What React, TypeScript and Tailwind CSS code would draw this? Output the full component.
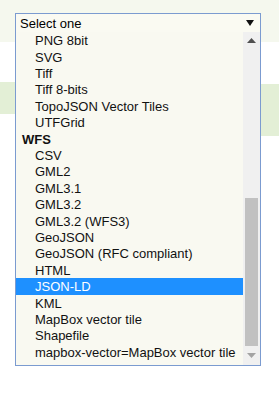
const groups: { label?: string; options: string[] }[] = [
  {
    options: ["PNG 8bit", "SVG", "Tiff", "Tiff 8-bits", "TopoJSON Vector Tiles", "UTFGrid"],
  },
  {
    label: "WFS",
    options: [
      "CSV",
      "GML2",
      "GML3.1",
      "GML3.2",
      "GML3.2 (WFS3)",
      "GeoJSON",
      "GeoJSON (RFC compliant)",
      "HTML",
      "JSON-LD",
      "KML",
      "MapBox vector tile",
      "Shapefile",
      "mapbox-vector=MapBox vector tile",
    ],
  },
];

function Row({ text, selected, bold, indent }: { text: string; selected?: boolean; bold?: boolean; indent?: boolean }) {
  return (
    <div
      className={`flex h-[16.4px] items-center whitespace-nowrap leading-none ${indent ? "pl-[19px]" : "pl-[6px]"} ${
        bold ? "font-bold" : ""
      } ${selected ? "bg-[#1e90ff] text-white" : "text-[#111]"}`}
    >
      {text}
    </div>
  );
}

export default function App() {
  return (
    <div className="relative h-[401px] w-[279px] overflow-hidden bg-white font-['Liberation_Sans',Arial,sans-serif] text-[13px]">
      <div className="h-[42px] bg-[#f5f8ee]" />
      <div className="flex h-[94px] items-start justify-between pt-[40px]">
        <div className="h-[32px] w-[16px] bg-[#e3efd6]" />
        <div className="mt-[2px] h-[52px] w-[20px] bg-[#e3efd6]" />
      </div>

      {/* select box */}
      <div className="absolute left-[15px] top-[13px] flex h-[20px] w-[246px] items-center justify-between border border-[#7b9bd0] bg-[#fafaf2] pl-[4px] pr-[6px] text-black">
        <span className="leading-none">Select one</span>
        <svg width="8" height="6" viewBox="0 0 8 6">
          <path d="M0 0h8L4 6z" fill="#111" />
        </svg>
      </div>

      {/* dropdown list */}
      <div className="absolute left-[15px] top-[32px] flex h-[334px] w-[246px] border border-t-0 border-[#7b9bd0] bg-[#f9f9f1]">
        <div className="flex-1 overflow-hidden pt-[0.6px]">
          {groups.map((g, gi) => (
            <div key={gi}>
              {g.label && <Row text={g.label} bold />}
              {g.options.map((o) => (
                <Row key={o} text={o} indent selected={o === "JSON-LD"} />
              ))}
            </div>
          ))}
        </div>
        <div className="flex w-[17px] flex-col bg-[#f0f0f0]">
          <div className="flex h-[17px] items-center justify-center">
            <svg width="9" height="5" viewBox="0 0 9 5">
              <path d="M0 5L4.5 0L9 5z" fill="#505050" />
            </svg>
          </div>
          <div className="h-[149px]" />
          <div className="mx-[2px] h-[148px] bg-[#c1c1c1]" />
          <div className="flex h-[19px] items-center justify-center">
            <svg width="9" height="5" viewBox="0 0 9 5">
              <path d="M0 0L4.5 5L9 0z" fill="#a3a3a3" />
            </svg>
          </div>
        </div>
      </div>
    </div>
  );
}
